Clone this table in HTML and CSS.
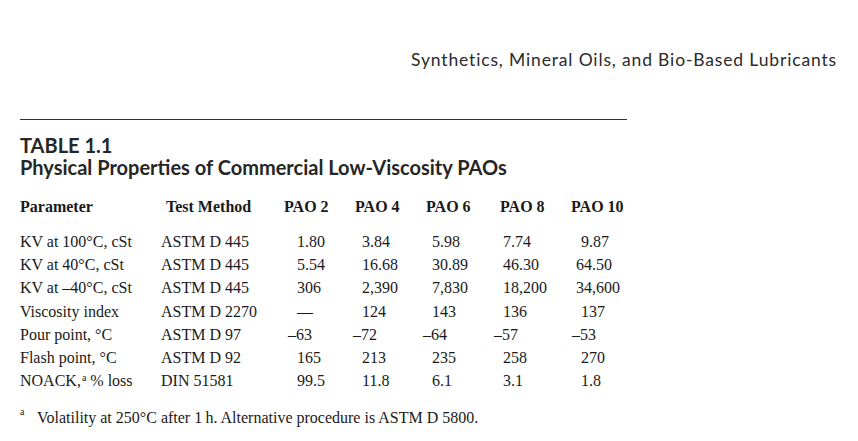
FILE: index.html
```html
<!DOCTYPE html>
<html>
<head>
<meta charset="utf-8">
<link rel="stylesheet" href="styles.css">
</head>
<body>
<header class="running-head">Synthetics, Mineral Oils, and Bio-Based Lubricants</header>
<div class="rule"></div>
<h1 class="caption"><span class="label">TABLE 1.1</span><span class="title">Physical Properties of Commercial Low-Viscosity PAOs</span></h1>
<table class="data">
  <colgroup>
    <col class="w-param"><col class="w-method"><col class="w-pao"><col class="w-pao"><col class="w-pao6"><col class="w-pao"><col class="w-last">
  </colgroup>
  <thead>
    <tr>
      <th>Parameter</th>
      <th class="m">Test Method</th>
      <th>PAO 2</th>
      <th>PAO 4</th>
      <th>PAO 6</th>
      <th>PAO 8</th>
      <th>PAO 10</th>
    </tr>
  </thead>
  <tbody>
    <tr>
      <td>KV at 100°C, cSt</td><td>ASTM D 445</td>
      <td class="c2">1.80</td><td class="c4">3.84</td><td class="c6">5.98</td><td class="c8">7.74</td><td class="c10">9.87</td>
    </tr>
    <tr>
      <td>KV at 40°C, cSt</td><td>ASTM D 445</td>
      <td class="c2">5.54</td><td class="c4">16.68</td><td class="c6">30.89</td><td class="c8">46.30</td><td class="c10w">64.50</td>
    </tr>
    <tr>
      <td>KV at –40°C, cSt</td><td>ASTM D 445</td>
      <td class="c2">306</td><td class="c4">2,390</td><td class="c6">7,830</td><td class="c8">18,200</td><td class="c10w">34,600</td>
    </tr>
    <tr>
      <td>Viscosity index</td><td>ASTM D 2270</td>
      <td class="c2">—</td><td class="c4">124</td><td class="c6">143</td><td class="c8">136</td><td class="c10">137</td>
    </tr>
    <tr>
      <td>Pour point, °C</td><td>ASTM D 97</td>
      <td class="c2 neg">–63</td><td class="c4 neg">–72</td><td class="c6 neg">–64</td><td class="c8 neg">–57</td><td class="c10 neg">–53</td>
    </tr>
    <tr>
      <td>Flash point, °C</td><td>ASTM D 92</td>
      <td class="c2">165</td><td class="c4">213</td><td class="c6">235</td><td class="c8">258</td><td class="c10">270</td>
    </tr>
    <tr>
      <td>NOACK,<sup class="fn">a</sup> % loss</td><td>DIN 51581</td>
      <td class="c2">99.5</td><td class="c4">11.8</td><td class="c6">6.1</td><td class="c8">3.1</td><td class="c10">1.8</td>
    </tr>
  </tbody>
</table>
<p class="footnote"><sup class="fn-mark">a</sup><span>Volatility at 250°C after 1&#8201;h. Alternative procedure is ASTM D 5800.</span></p>
</body>
</html>
```

FILE: styles.css
```css
html, body {
  margin: 0;
  padding: 0;
  background: #ffffff;
}
body {
  width: 858px;
  height: 441px;
  overflow: hidden;
  color: #1a1a1a;
  font-family: "Liberation Serif", "Times New Roman", serif;
}
.running-head {
  display: flex;
  justify-content: flex-end;
  padding: 50px 21px 0 0;
  font-family: Lato, "Open Sans", sans-serif;
  font-size: 17.5px;
  letter-spacing: 0.85px;
  line-height: 20px;
  color: #2a2a2a;
}
.rule {
  margin: 49px 0 0 20px;
  width: 607px;
  height: 1px;
  background: #333333;
}
.caption {
  margin: 14px 0 0 20px;
  display: flex;
  flex-direction: column;
  font-family: Lato, "Open Sans", sans-serif;
  font-weight: bold;
  font-size: 20px;
  line-height: 22px;
  color: #262626;
}
.data {
  margin: 17px 0 0 20px;
  border-collapse: collapse;
  table-layout: fixed;
  width: 624px;
  font-size: 16px;
}
.w-param { width: 141px; }
.w-method { width: 123px; }
.w-pao { width: 71px; }
.w-pao6 { width: 74px; }
.w-last { width: 73px; }
.data th, .data td {
  padding: 0;
  text-align: left;
  white-space: nowrap;
  vertical-align: baseline;
}
.data th {
  height: 35px;
  line-height: 23px;
  vertical-align: top;
  font-weight: bold;
}
.data th.m { padding-left: 5px; }
.data td {
  height: 23.2px;
  line-height: 23.2px;
}
.data td.c2 { padding-left: 13px; }
.data td.c4 { padding-left: 7px; }
.data td.c6 { padding-left: 6px; }
.data td.c8 { padding-left: 3px; }
.data td.c10 { padding-left: 10px; }
.data td.c10w { padding-left: 5px; }
.data td.neg { text-indent: -9px; }
.fn {
  font-size: 10px;
  line-height: 0;
  vertical-align: 5px;
  margin-left: 1px;
}
.footnote {
  margin: 14px 0 0 20px;
  font-size: 16px;
  line-height: 23px;
  display: flex;
}
.fn-mark {
  width: 17px;
  font-size: 10px;
  line-height: 0;
  position: relative;
  top: 6px;
}
```
